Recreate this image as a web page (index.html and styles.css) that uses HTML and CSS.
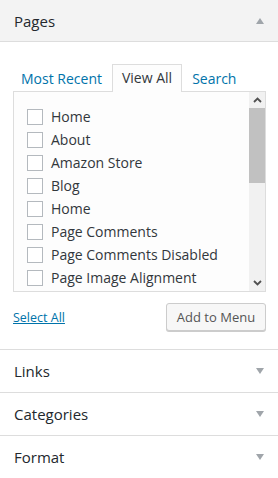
FILE: index.html
```html
<!DOCTYPE html>
<html>
<head>
<meta charset="utf-8">
<link rel="stylesheet" href="styles.css">
</head>
<body>
<div class="panel">
  <div class="section open">
    <div class="sec-title head-open">
      <span>Pages</span>
      <span class="tri up"></span>
    </div>
    <div class="sec-body">
      <div class="tabs">
        <a class="tab">Most Recent</a>
        <a class="tab active">View All</a>
        <a class="tab">Search</a>
      </div>
      <div class="listbox">
        <ul class="items">
          <li><span class="cb"></span>Home</li>
          <li><span class="cb"></span>About</li>
          <li><span class="cb"></span>Amazon Store</li>
          <li><span class="cb"></span>Blog</li>
          <li><span class="cb"></span>Home</li>
          <li><span class="cb"></span>Page Comments</li>
          <li><span class="cb"></span>Page Comments Disabled</li>
          <li><span class="cb"></span>Page Image Alignment</li>
        </ul>
        <div class="scrollbar">
          <div class="sb-btn"><svg width="9" height="6" viewBox="0 0 9 6"><path d="M1 5 L4.5 1.5 L8 5" fill="none" stroke="#505050" stroke-width="1.8"/></svg></div>
          <div class="sb-track"><div class="sb-thumb"></div></div>
          <div class="sb-btn"><svg width="9" height="6" viewBox="0 0 9 6"><path d="M1 1 L4.5 4.5 L8 1" fill="none" stroke="#505050" stroke-width="1.8"/></svg></div>
        </div>
      </div>
      <div class="actions">
        <a class="select-all">Select All</a>
        <button class="btn">Add to Menu</button>
      </div>
    </div>
  </div>
  <div class="section">
    <div class="sec-title"><span>Links</span><span class="tri down"></span></div>
  </div>
  <div class="section">
    <div class="sec-title"><span>Categories</span><span class="tri down"></span></div>
  </div>
  <div class="section">
    <div class="sec-title"><span>Format</span><span class="tri down"></span></div>
  </div>
</div>
</body>
</html>
```
FILE: styles.css
```css
* { box-sizing: border-box; }
html, body { margin: 0; padding: 0; background: #fff; }
body {
  font-family: "Open Sans", "Noto Sans", sans-serif;
  font-size: 14px;
  color: #23282d;
  width: 278px;
}
.panel { width: 278px; }
.section { border-bottom: 1px solid #dddddd; }
.section:last-child { border-bottom: none; }
.sec-title {
  height: 42px;
  display: flex;
  align-items: center;
  justify-content: space-between;
  padding: 0 14px 0 14px;
  font-size: 15px;
  color: #23282d;
  line-height: 20px;
}
.head-open {
  background: #f3f3f3;
  border-bottom: 1px solid #dddddd;
}
.tri {
  width: 0; height: 0;
  border-left: 4px solid transparent;
  border-right: 4px solid transparent;
}
.tri.up { border-bottom: 6px solid #a0a5aa; }
.tri.down { border-top: 6px solid #a0a5aa; }
.sec-body { padding: 23px 12px 18px 13px; }
.tabs {
  display: flex;
  align-items: flex-end;
  height: 27px;
  margin-bottom: -1px;
  margin-left: -2px;
  position: relative;
  z-index: 1;
}
.tab {
  display: block;
  padding: 0 9px;
  height: 27px;
  line-height: 26px;
  color: #0073aa;
  font-size: 14px;
  border: 1px solid transparent;
  border-bottom: none;
}
.tab.active {
  color: #32373c;
  background: #fdfdfd;
  border-color: #dddddd;
  height: 28px;
}
.listbox {
  display: flex;
  border: 1px solid #dddddd;
  background: #fdfdfd;
  height: 201px;
  overflow: hidden;
}
.items {
  flex: 1;
  list-style: none;
  margin: 0;
  padding: 13px 0 0 13px;
  overflow: hidden;
}
.items li {
  display: flex;
  align-items: center;
  height: 23px;
  color: #32373c;
  font-size: 14px;
  white-space: nowrap;
}
.cb {
  width: 16px; height: 16px;
  border: 1px solid #b4b9be;
  background: #fff;
  margin-right: 8px;
  flex: none;
}
.scrollbar {
  width: 16px;
  flex: none;
  display: flex;
  flex-direction: column;
  background: #f1f1f1;
}
.sb-btn {
  height: 16px;
  display: flex;
  align-items: center;
  justify-content: center;
}
.sb-track { flex: 1; }
.sb-thumb {
  height: 75px;
  background: #c1c1c1;
}
.actions {
  display: flex;
  justify-content: space-between;
  align-items: center;
  margin-top: 11px;
}
.select-all {
  color: #0073aa;
  text-decoration: underline;
  font-size: 12.5px;
}
.btn {
  font-family: "Open Sans", "Noto Sans", sans-serif;
  font-size: 13px;
  color: #555;
  background: #f7f7f7;
  border: 1px solid #cccccc;
  border-radius: 3px;
  height: 28px;
  width: 100px;
  padding: 0;
  box-shadow: 0 1px 0 #cccccc;
}
```
